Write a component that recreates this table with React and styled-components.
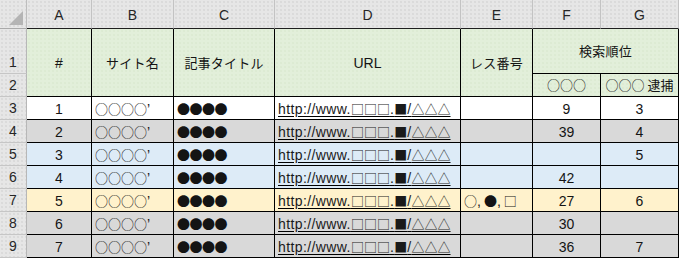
import React from "react";
import styled, { createGlobalStyle, css } from "styled-components";

const Global = createGlobalStyle`
  html, body { margin: 0; padding: 0; background: #fff; }
  #root { width: 679px; height: 258px; overflow: hidden; }
`;

const dots = (base, dot) => css`
  background-color: ${base};
  background-image: radial-gradient(circle, ${dot} 0.55px, transparent 0.9px);
  background-size: 4px 4px;
`;

const Sheet = styled.div`
  display: grid;
  grid-template-columns: 27px 65px 82px 101px 186px 72px 68px 78px;
  grid-template-rows: 29px 45px 23px repeat(7, 23px);
  width: 679px;
  height: 258px;
  overflow: hidden;
  font-family: "Liberation Sans", "Noto Sans CJK JP", sans-serif;
  font-size: 14px;
  line-height: 16px;
  color: #141414;
`;

const Corner = styled.div`
  ${dots("#e6e6e6", "#d2d2d2")}
  box-sizing: border-box;
  border-right: 1px solid #bdbdbd;
  border-bottom: 1px solid #a9a9a9;
  display: flex;
  align-items: flex-end;
  justify-content: flex-end;
  padding: 0 3px 3px 0;
`;

const Triangle = styled.span`
  width: 14px;
  height: 14px;
  background: #b4b4b4;
  clip-path: polygon(100% 0, 100% 100%, 0 100%);
`;

const ColHead = styled.div`
  ${dots("#e6e6e6", "#d2d2d2")}
  box-sizing: border-box;
  border-right: 1px solid #c3c3c3;
  border-bottom: 1px solid #1e1e1e;
  display: flex;
  align-items: center;
  justify-content: center;
  padding-top: 2px;
  color: #262626;
`;

const RowHead = styled.div`
  ${dots("#e6e6e6", "#d2d2d2")}
  grid-column: 1;
  box-sizing: border-box;
  border-right: 1px solid #b7b7b7;
  border-bottom: 1px solid #c6c6c6;
  display: flex;
  align-items: flex-end;
  justify-content: center;
  padding-bottom: 3px;
  color: #262626;
`;

const fills = {
  green: "#e2efda",
  white: "#ffffff",
  gray: "#d9d9d9",
  blue: "#ddebf7",
  yellow: "#fff2cc",
};

const Cell = styled.div`
  box-sizing: border-box;
  grid-column: span ${(p) => p.$cols || 1};
  grid-row: span ${(p) => p.$rows || 1};
  ${(p) =>
    p.$bg === "green"
      ? dots(fills.green, "#d9e8cf")
      : css`background: ${fills[p.$bg] || "#fff"};`}
  border-right: 1px solid #000;
  border-bottom: 1px solid #000;
  display: flex;
  align-items: ${(p) => (p.$middle ? "center" : "flex-end")};
  justify-content: ${(p) => (p.$left ? "flex-start" : "center")};
  padding: ${(p) => (p.$middle ? "0" : "0 0 2px")};
  padding-left: ${(p) => (p.$left ? "3px" : "0")};
  white-space: pre;
  overflow: hidden;
`;

const Sym = styled.span`
  font-family: "Noto Sans CJK JP", sans-serif;
  font-size: 13px;
  letter-spacing: ${(p) => p.$ls || "0"};
`;

const Jp = styled.span`
  font-family: "Noto Sans CJK JP", sans-serif;
  font-size: 13px;
  letter-spacing: 0.2px;
`;

const Link = styled.span`
  text-decoration: underline;
  text-decoration-color: #000;
  text-underline-offset: 2px;
  letter-spacing: 0.4px;
  color: #1a1a1a;
`;

const Comma = styled.span`
  margin-right: 3px;
`;

const rows = [
  { n: 3, a: "1", bg: "white", f: "9", g: "3" },
  { n: 4, a: "2", bg: "gray", f: "39", g: "4" },
  { n: 5, a: "3", bg: "blue", f: "", g: "5" },
  { n: 6, a: "4", bg: "blue", f: "42", g: "" },
  { n: 7, a: "5", bg: "yellow", e: true, f: "27", g: "6" },
  { n: 8, a: "6", bg: "gray", f: "30", g: "" },
  { n: 9, a: "7", bg: "gray", f: "36", g: "7" },
];

const Url = () => (
  <Link>
    http://www.<Sym>□□□</Sym>.<Sym>■</Sym>/<Sym>△△△</Sym>
  </Link>
);

export default function App() {
  return (
    <>
      <Global />
      <Sheet>
        <Corner>
          <Triangle />
        </Corner>
        {["A", "B", "C", "D", "E", "F", "G"].map((c) => (
          <ColHead key={c}>{c}</ColHead>
        ))}

        <RowHead>1</RowHead>
        <Cell $bg="green" $rows={2} $middle>#</Cell>
        <Cell $bg="green" $rows={2} $middle><Jp>サイト名</Jp></Cell>
        <Cell $bg="green" $rows={2} $middle><Jp>記事タイトル</Jp></Cell>
        <Cell $bg="green" $rows={2} $middle>URL</Cell>
        <Cell $bg="green" $rows={2} $middle><Jp>レス番号</Jp></Cell>
        <Cell $bg="green" $cols={2} $middle><Jp>検索順位</Jp></Cell>
        <RowHead>2</RowHead>
        <Cell $bg="green" $middle><Sym>○○○</Sym></Cell>
        <Cell $bg="green" $middle><Sym>○○○ 逮捕</Sym></Cell>

        {rows.map((r) => (
          <React.Fragment key={r.n}>
            <RowHead>{r.n}</RowHead>
            <Cell $bg={r.bg}>{r.a}</Cell>
            <Cell $bg={r.bg} $left><Sym>○○○○</Sym>’</Cell>
            <Cell $bg={r.bg} $left><Sym $ls="-0.5px">●●●●</Sym></Cell>
            <Cell $bg={r.bg} $left><Url /></Cell>
            <Cell $bg={r.bg} $left>
              {r.e ? (
                <>
                  <Sym>○</Sym><Comma>,</Comma><Sym>●</Sym><Comma>,</Comma><Sym>□</Sym>
                </>
              ) : null}
            </Cell>
            <Cell $bg={r.bg}>{r.f}</Cell>
            <Cell $bg={r.bg}>{r.g}</Cell>
          </React.Fragment>
        ))}
      </Sheet>
    </>
  );
}
